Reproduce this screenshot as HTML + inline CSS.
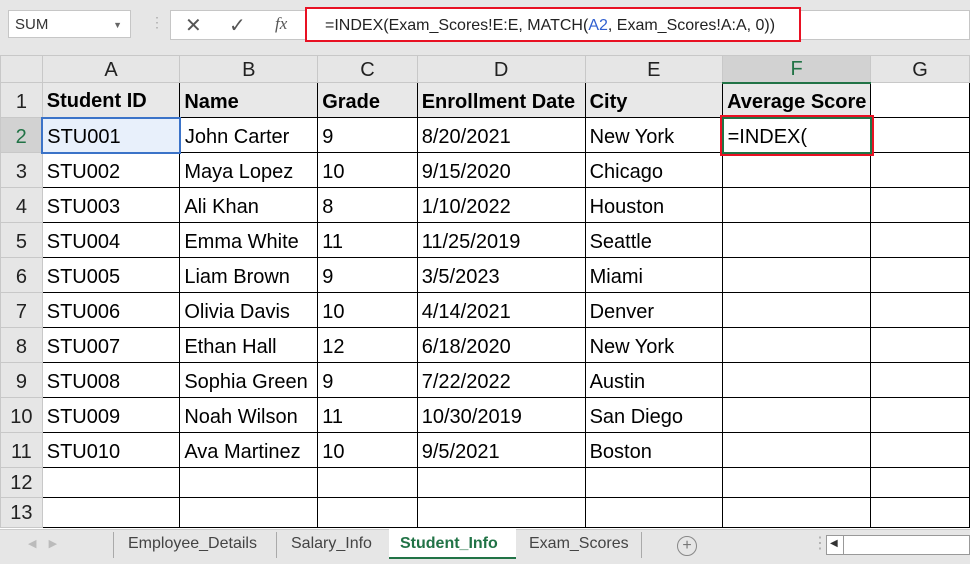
<!DOCTYPE html>
<html><head><style>
body{margin:0;width:970px;height:563px;overflow:hidden;background:#fff;font-family:"Liberation Sans",sans-serif;position:relative}
.top{position:absolute;left:0;top:0;width:970px;height:55px;background:#e6e6e6}
.nb{position:absolute;left:8px;top:10px;width:123px;height:28px;background:#fff;border:1px solid #c6c6c6;box-sizing:border-box;font-size:15px;color:#333;line-height:28px;padding-left:6px}
.fb{position:absolute;left:170px;top:10px;width:800px;height:30px;background:#fff;border:1px solid #c6c6c6;box-sizing:border-box}
.red{position:absolute;left:305px;top:7px;width:496px;height:35px;border:2px solid #e81123;box-sizing:border-box;font-size:16px;line-height:33px;padding-left:18px;color:#222;white-space:nowrap}
table{position:absolute;left:0;top:55px;border-collapse:collapse;table-layout:fixed}
td{border:1px solid #000;padding:4px 0 0 4px;font-size:20px;white-space:nowrap;overflow:hidden;color:#000;box-sizing:border-box}
td.h{background:#e6e6e6;border-color:#c8c8c8;text-align:center;padding:2px 0 0 0;color:#222;font-size:20px}
td.r{background:#e6e6e6;border-color:#c8c8c8;text-align:center;padding:4px 0 0 0;color:#222}
tr.b td:not(.r){font-weight:bold;background:#e8e8e8}
.tabs{position:absolute;left:0;top:529px;width:970px;height:34px;background:#e6e6e6;border-top:1px solid #ccc;font-size:16px;color:#444}
.tab{position:absolute;top:0;height:28px;line-height:28px}
</style></head><body>
<div class="top"></div>
<div class="nb">SUM<span style="position:absolute;right:8px;top:0;font-size:9px;color:#666">▼</span></div>
<div style="position:absolute;left:150px;top:14px;color:#aaa;font-size:14px">⋮</div>
<div class="fb">
<span style="position:absolute;left:14px;top:2px;font-size:20px;color:#555">✕</span>
<span style="position:absolute;left:58px;top:2px;font-size:20px;color:#555">✓</span>
<span style="position:absolute;left:104px;top:3px;font-size:17px;color:#555;font-family:'Liberation Serif',serif;font-style:italic">fx</span>
</div>
<div class="red" style="background:#fff">=INDEX(Exam_Scores!E:E, MATCH(<span style="color:#2f5fd0">A2</span>, Exam_Scores!A:A, 0))</div>
<table>
<colgroup><col style="width:42px"><col style="width:138px"><col style="width:138px"><col style="width:100px"><col style="width:168px"><col style="width:138px"><col style="width:148px"><col style="width:100px"></colgroup>
<tr style="height:27px"><td class="h" style="background:#e6e6e6"></td><td class="h">A</td><td class="h">B</td><td class="h">C</td><td class="h">D</td><td class="h">E</td><td class="h" style="background:#d2d2d2;color:#217346;border-bottom:2px solid #217346">F</td><td class="h">G</td></tr>
<tr class="b" style="height:35px"><td class="r">1</td><td>Student ID</td><td>Name</td><td>Grade</td><td>Enrollment Date</td><td>City</td><td>Average Score</td><td style="background:#fff;font-weight:normal"></td></tr>
<tr style="height:35px"><td class="r" style="background:#d2d2d2;color:#217346">2</td><td style="background:#e8f0fb;border:2px solid #3b73c8">STU001</td><td>John Carter</td><td>9</td><td>8/20/2021</td><td>New York</td><td style="border:2px solid #217346;outline:2px solid #e81123;outline-offset:1px">=INDEX(</td><td></td></tr>
<tr style="height:35px"><td class="r">3</td><td>STU002</td><td>Maya Lopez</td><td>10</td><td>9/15/2020</td><td>Chicago</td><td></td><td></td></tr>
<tr style="height:35px"><td class="r">4</td><td>STU003</td><td>Ali Khan</td><td>8</td><td>1/10/2022</td><td>Houston</td><td></td><td></td></tr>
<tr style="height:35px"><td class="r">5</td><td>STU004</td><td>Emma White</td><td>11</td><td>11/25/2019</td><td>Seattle</td><td></td><td></td></tr>
<tr style="height:35px"><td class="r">6</td><td>STU005</td><td>Liam Brown</td><td>9</td><td>3/5/2023</td><td>Miami</td><td></td><td></td></tr>
<tr style="height:35px"><td class="r">7</td><td>STU006</td><td>Olivia Davis</td><td>10</td><td>4/14/2021</td><td>Denver</td><td></td><td></td></tr>
<tr style="height:35px"><td class="r">8</td><td>STU007</td><td>Ethan Hall</td><td>12</td><td>6/18/2020</td><td>New York</td><td></td><td></td></tr>
<tr style="height:35px"><td class="r">9</td><td>STU008</td><td>Sophia Green</td><td>9</td><td>7/22/2022</td><td>Austin</td><td></td><td></td></tr>
<tr style="height:35px"><td class="r">10</td><td>STU009</td><td>Noah Wilson</td><td>11</td><td>10/30/2019</td><td>San Diego</td><td></td><td></td></tr>
<tr style="height:35px"><td class="r">11</td><td>STU010</td><td>Ava Martinez</td><td>10</td><td>9/5/2021</td><td>Boston</td><td></td><td></td></tr>
<tr style="height:30px"><td class="r" style="padding-top:2px">12</td><td></td><td></td><td></td><td></td><td></td><td></td><td></td></tr>
<tr style="height:30px"><td class="r" style="padding-top:2px">13</td><td></td><td></td><td></td><td></td><td></td><td></td><td></td></tr>
</table>
<div class="tabs">
<span class="tab" style="left:28px;color:#bbb;font-size:11px">◀&nbsp;&nbsp;&nbsp;&nbsp;▶</span>
<div style="position:absolute;left:113px;top:2px;width:1px;height:26px;background:#aaa"></div>
<span class="tab" style="left:128px">Employee_Details</span>
<div style="position:absolute;left:276px;top:2px;width:1px;height:26px;background:#aaa"></div>
<span class="tab" style="left:291px">Salary_Info</span>
<div style="position:absolute;left:389px;top:-1px;width:127px;height:28px;background:#fff;border-bottom:2px solid #217346"></div>
<span class="tab" style="left:400px;color:#217346;font-weight:bold">Student_Info</span>
<span class="tab" style="left:529px">Exam_Scores</span>
<div style="position:absolute;left:641px;top:2px;width:1px;height:26px;background:#aaa"></div>
<span class="tab" style="left:677px;width:18px;height:18px;top:6px;border:1px solid #888;border-radius:50%;line-height:17px;text-align:center;color:#777">+</span>
<span class="tab" style="left:812px;color:#aaa">⋮</span>
<div style="position:absolute;left:826px;top:5px;width:144px;height:20px;background:#fff;border:1px solid #999;box-sizing:border-box"><span style="position:absolute;left:3px;top:2px;font-size:10px;color:#333">◀</span><div style="position:absolute;left:16px;top:0;width:1px;height:18px;background:#999"></div></div>
</div>
</body></html>
